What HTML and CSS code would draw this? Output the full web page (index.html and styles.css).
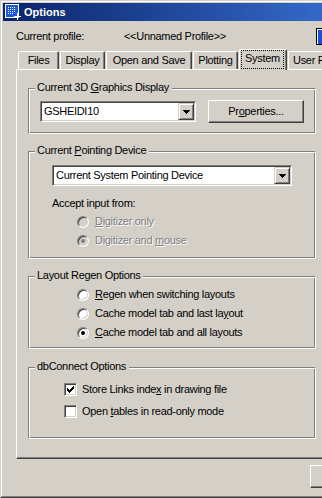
FILE: index.html
```html
<!DOCTYPE html>
<html>

<head>
    <meta charset="UTF-8">
    <title>Options</title>
    <link rel="stylesheet" href="styles.css">
</head>

<body>
    <div class="window">
        <div class="frame">
            <div class="titlebar">
                <svg class="appicon" width="16" height="16" viewBox="0 0 16 16">
                    <rect x="0.5" y="0.5" width="13" height="13" fill="#1a5ad8" stroke="#fff"/>
                    <path fill="#fff" d="M3 3h1v1H3zM5 3h1v1H5zM7 3h1v1H7zM9 3h1v1H9zM3 5h1v1H3zM5 5h1v1H5zM7 5h1v1H7zM9 5h1v1H9zM3 7h1v1H3zM5 7h1v1H5zM7 7h1v1H7zM9 7h1v1H9zM3 9h1v1H3zM5 9h1v1H5zM7 9h1v1H7z"/>
                    <path fill="#fff" d="M12 9h1v7h-1zM9 12h7v1H9z"/>
                </svg>
                <span class="title">Options</span>
            </div>

            <div class="profile">
                <span class="profile-label">Current profile:</span>
                <span class="profile-name">&lt;&lt;Unnamed Profile&gt;&gt;</span>
                <span class="drawing-icon"></span>
            </div>

            <div class="tabs">
                <div class="tab t-files">Files</div>
                <div class="tab t-display">Display</div>
                <div class="tab t-open">Open and Save</div>
                <div class="tab t-plot">Plotting</div>
                <div class="tab t-system active"><span class="focus">System</span></div>
                <div class="tab t-user">User Preferences</div>
            </div>

            <div class="panel">
                <!-- grafica 3D -->
                <div class="group g-graphics">
                    <div class="legend">Current 3D <u>G</u>raphics Display</div>
                    <div class="group-body">
                        <div class="row">
                            <div class="combo c-graphics">
                                <span class="combo-text">GSHEIDI10</span>
                                <span class="drop"><svg width="7" height="4" viewBox="0 0 7 4"><path d="M0 0h7v1H0zM1 1h5v1H1zM2 2h3v1H2zM3 3h1v1H3z"/></svg></span>
                            </div>
                            <button class="btn props">Pr<u>o</u>perties...</button>
                        </div>
                    </div>
                </div>

                <!-- dispositivo di puntamento -->
                <div class="group g-pointing">
                    <div class="legend">Current <u>P</u>ointing Device</div>
                    <div class="group-body">
                        <div class="combo c-pointing">
                            <span class="combo-text">Current System Pointing Device</span>
                            <span class="drop"><svg width="7" height="4" viewBox="0 0 7 4"><path d="M0 0h7v1H0zM1 1h5v1H1zM2 2h3v1H2zM3 3h1v1H3z"/></svg></span>
                        </div>
                        <div class="accept">Accept input from:</div>
                        <div class="radios indent">
                            <div class="radio disabled"><span class="circle"></span><span class="label"><u>D</u>igitizer only</span></div>
                            <div class="radio disabled checked"><span class="circle"><span class="pip"></span></span><span class="label">Digitizer and <u>m</u>ouse</span></div>
                        </div>
                    </div>
                </div>

                <!-- regen layout -->
                <div class="group g-regen">
                    <div class="legend">Layout Regen Options</div>
                    <div class="group-body">
                        <div class="radio"><span class="circle"></span><span class="label"><u>R</u>egen when switching layouts</span></div>
                        <div class="radio"><span class="circle"></span><span class="label">Cache model tab and last la<u>y</u>out</span></div>
                        <div class="radio checked"><span class="circle"><span class="pip"></span></span><span class="label"><u>C</u>ache model tab and all layouts</span></div>
                    </div>
                </div>

                <!-- dbConnect -->
                <div class="group g-db">
                    <div class="legend">dbConnect Options</div>
                    <div class="group-body">
                        <div class="check">
                            <span class="box"><svg width="7" height="7" viewBox="0 0 7 7"><path d="M6 0h1v1H6zM5 1h2v1H5zM0 2h1v1H0zM4 2h3v1H4zM0 3h2v1H0zM3 3h3v1H3zM0 4h5v1H0zM1 5h3v1H1zM2 6h1v1H2z"/></svg></span>
                            <span class="label">Store Links inde<u>x</u> in drawing file</span>
                        </div>
                        <div class="check">
                            <span class="box"></span>
                            <span class="label">Open <u>t</u>ables in read-only mode</span>
                        </div>
                    </div>
                </div>
            </div>

            <div class="footer">
                <button class="btn ok"></button>
            </div>
        </div>
    </div>
</body>

</html>
```

FILE: styles.css
```css
* {
    box-sizing: border-box;
}

body {
    margin: 0;
    font-family: "Liberation Sans", Arial, sans-serif;
    font-size: 11px;
    line-height: 13px;
    letter-spacing: -0.3px;
    color: #000;
    background-color: #D4D0C8;
}

.window {
    width: 322px;
    height: 498px;
    overflow: hidden;
    background-color: #D4D0C8;
    border-top: 1px solid #D4D0C8;
    border-left: 1px solid #D4D0C8;
    border-bottom: 1px solid #404040;
}

.frame {
    height: 100%;
    border-top: 1px solid #fff;
    border-left: 1px solid #fff;
    border-bottom: 1px solid #808080;
    padding: 1px 0 0 1px;
}

/* barra del titolo */

.titlebar {
    display: flex;
    align-items: flex-start;
    height: 18px;
    padding: 1px 0 0 2px;
    background: linear-gradient(to right, #0A246A, #3468c8);
}

.appicon {
    flex: none;
    margin-right: 3px;
}

.title {
    margin-top: 2px;
    color: #fff;
    font-weight: bold;
    letter-spacing: 0;
}

.profile {
    display: flex;
    align-items: center;
    height: 17px;
    margin-top: 7px;
    padding-left: 13px;
}

.profile-label {
    width: 108px;
}

.drawing-icon {
    width: 6px;
    height: 17px;
    margin-left: auto;
    border: 1px solid #000;
    border-right: none;
    background-color: #1a50d8;
    box-shadow: inset 1px 1px 0 #fff;
}

/* linguette */

.tabs {
    display: flex;
    align-items: flex-end;
    height: 20px;
    margin-top: 4px;
    padding-left: 15px;
}

.tab {
    flex: none;
    height: 18px;
    margin-right: 1px;
    padding-top: 2px;
    text-align: center;
    white-space: nowrap;
    border-top: 1px solid #fff;
    border-left: 1px solid #fff;
    border-right: 1px solid #404040;
    border-radius: 2px 2px 0 0;
    box-shadow: inset -1px 0 0 #808080;
}

.t-files {
    width: 41px;
}

.t-display {
    width: 45px;
}

.t-open {
    width: 86px;
}

.t-plot {
    width: 45px;
}

.t-system {
    width: 48px;
}

.t-user {
    width: 96px;
    text-align: left;
    padding-left: 4px;
}

.tab.active {
    position: relative;
    z-index: 1;
    height: 21px;
    margin-bottom: -1px;
    padding: 0 2px 0 1px;
    background-color: #D4D0C8;
}

.focus {
    display: block;
    height: 19px;
    padding-top: 1px;
    border: 1px dotted #000;
}

/* pannello */

.panel {
    width: 330px;
    height: 390px;
    margin-left: 13px;
    padding: 18px 0 0 11px;
    border-top: 1px solid #fff;
    border-left: 1px solid #fff;
    border-bottom: 1px solid #404040;
    box-shadow: inset 0 -1px 0 #808080;
}

.group {
    width: 288px;
    border-top: 1px solid #808080;
    border-left: 1px solid #808080;
    border-right: 1px solid #fff;
    border-bottom: 1px solid #fff;
    box-shadow: inset 1px 1px 0 #fff, inset -1px -1px 0 #808080;
}

.legend {
    width: fit-content;
    margin: -8px 0 -5px 6px;
    padding: 0 3px 0 2px;
    background-color: #D4D0C8;
}

.g-graphics {
    height: 46px;
}

.g-graphics .group-body {
    padding: 11px 0 0 11px;
}

.g-pointing {
    height: 108px;
    margin-top: 17px;
}

.g-pointing .group-body {
    padding: 13px 0 0 23px;
}

.g-regen {
    height: 73px;
    margin-top: 17px;
}

.g-regen .group-body {
    padding: 8px 0 0 48px;
}

.g-db {
    height: 72px;
    margin-top: 18px;
}

.g-db .group-body {
    padding: 10px 0 0 35px;
}

.row {
    display: flex;
    align-items: center;
    height: 23px;
}

/* combo box */

.combo {
    display: flex;
    align-items: center;
    height: 21px;
    padding: 0 1px 0 3px;
    background-color: #fff;
    border-top: 1px solid #808080;
    border-left: 1px solid #808080;
    border-right: 1px solid #fff;
    border-bottom: 1px solid #fff;
    box-shadow: inset 1px 1px 0 #404040, inset -1px -1px 0 #D4D0C8;
}

.c-graphics {
    width: 156px;
}

.c-pointing {
    width: 240px;
}

.combo-text {
    white-space: nowrap;
}

.drop {
    display: flex;
    align-items: center;
    justify-content: center;
    width: 16px;
    height: 17px;
    margin-left: auto;
    background-color: #D4D0C8;
    border: 1px solid;
    border-color: #D4D0C8 #404040 #404040 #D4D0C8;
    box-shadow: inset 1px 1px 0 #fff, inset -1px -1px 0 #808080;
}

/* bottoni */

.btn {
    height: 23px;
    padding: 0;
    font: inherit;
    letter-spacing: inherit;
    color: #000;
    background-color: #D4D0C8;
    border: 1px solid;
    border-color: #fff #404040 #404040 #fff;
    box-shadow: inset -1px -1px 0 #808080;
}

.props {
    width: 96px;
    margin-left: 12px;
}

.accept {
    margin-top: 11px;
}

.radios {
    margin-top: 2px;
}

.indent {
    margin-left: 25px;
}

/* radio e checkbox */

.radio {
    display: flex;
    align-items: center;
    height: 19px;
}

.circle {
    display: flex;
    align-items: center;
    justify-content: center;
    width: 12px;
    height: 12px;
    margin-right: 6px;
    border-radius: 50%;
    border: 1px solid;
    border-color: #808080 #fff #fff #808080;
    box-shadow: inset 1px 1px 0 #404040, inset -1px -1px 0 #D4D0C8;
    background-color: #fff;
}

.pip {
    width: 4px;
    height: 4px;
    border-radius: 50%;
    background-color: #000;
}

.radio.disabled .circle {
    background-color: #D4D0C8;
}

.radio.disabled .pip {
    background-color: #808080;
}

.radio.disabled .label {
    color: #808080;
    text-shadow: 1px 1px 0 #fff;
}

.check {
    display: flex;
    align-items: center;
    height: 22px;
}

.box {
    display: flex;
    align-items: center;
    justify-content: center;
    width: 13px;
    height: 13px;
    margin-right: 5px;
    background-color: #fff;
    border: 1px solid;
    border-color: #808080 #fff #fff #808080;
    box-shadow: inset 1px 1px 0 #404040, inset -1px -1px 0 #D4D0C8;
}

.footer {
    height: 37px;
    padding: 6px 0 0 307px;
}

.ok {
    width: 75px;
}
```
